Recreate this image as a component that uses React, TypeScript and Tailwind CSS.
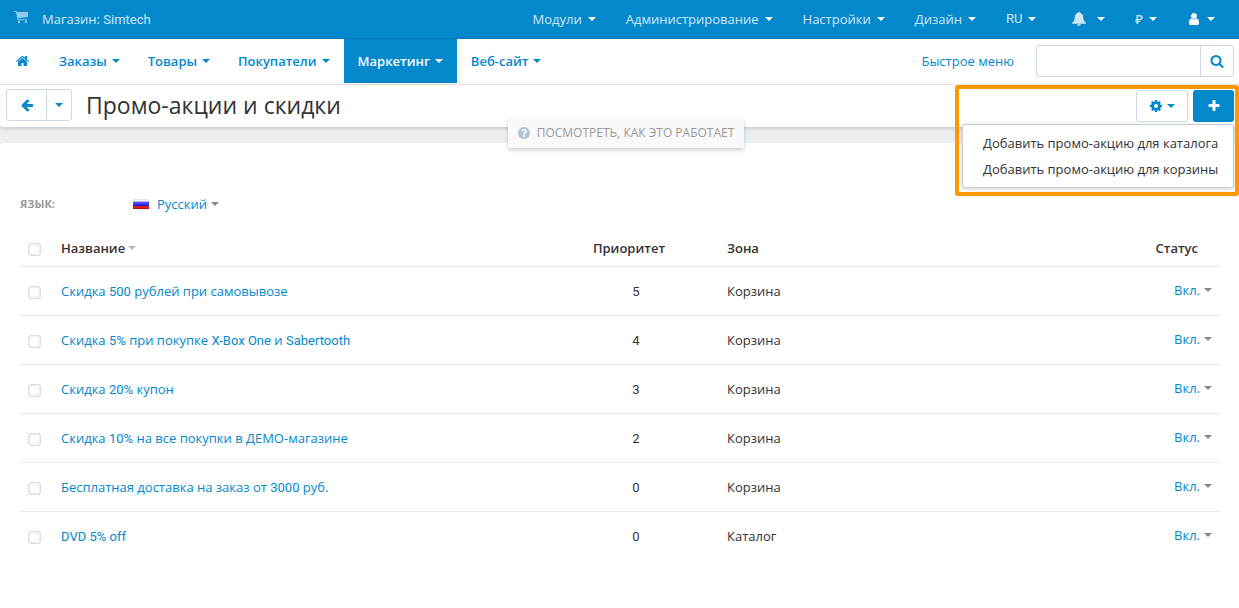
import React from "react";

const ICONS = {
  home: "M1408 992v480q0 26-19 45t-45 19h-384v-384h-256v384h-384q-26 0-45-19t-19-45v-480q0-1 .5-3t.5-3l575-474 575 474q1 2 1 6zm223-69l-62 74q-8 9-21 11h-3q-13 0-21-7l-692-577-692 577q-12 8-24 7-13-2-21-11l-62-74q-8-10-7-23.5t11-21.5l719-599q32-26 76-26t76 26l244 204v-195q0-14 9-23t23-9h192q14 0 23 9t9 23v408l219 182q10 8 11 21.5t-7 23.5z",
  back: "M1664 896v128q0 53-32.5 90.5t-84.5 37.5h-704l293 294q38 36 38 90t-38 90l-75 76q-37 37-90 37-52 0-91-37l-651-652q-37-37-37-90 0-52 37-91l651-650q38-38 91-38 52 0 90 38l75 74q38 38 38 91t-38 91l-293 293h704q52 0 84.5 37.5t32.5 90.5z",
  search: "M1216 832q0-185-131.5-316.5t-316.5-131.5-316.5 131.5-131.5 316.5 131.5 316.5 316.5 131.5 316.5-131.5 131.5-316.5zm512 832q0 52-38 90t-90 38q-54 0-90-38l-343-342q-179 124-399 124-143 0-273.5-55.5t-225-150-150-225-55.5-273.5 55.5-273.5 150-225 225-150 273.5-55.5 273.5 55.5 225 150 150 225 55.5 273.5q0 220-124 399l343 343q37 37 37 90z",
  cog: "M1152 896q0-106-75-181t-181-75-181 75-75 181 75 181 181 75 181-75 75-181zm512-109v222q0 12-8 23t-20 13l-185 28q-19 54-39 91 35 50 107 138 10 12 10 25t-9 23q-27 37-99 108t-94 71q-12 0-26-9l-138-108q-44 23-91 38-16 136-29 186-7 28-36 28h-222q-14 0-24.5-8.5t-11.5-21.5l-28-184q-49-16-90-37l-141 107q-10 9-25 9-14 0-25-11-126-114-165-168-7-10-7-23 0-12 8-23 15-21 51-66.5t54-70.5q-27-50-41-99l-183-27q-13-2-21-12.5t-8-23.5v-222q0-12 8-23t19-13l186-28q14-46 39-92-40-57-107-138-10-12-10-24 0-10 9-23 26-36 98.5-107.5t94.5-71.5q13 0 26 10l138 107q44-23 91-38 16-136 29-186 7-28 36-28h222q14 0 24.5 8.5t11.5 21.5l28 184q49 16 90 37l142-107q9-9 24-9 13 0 25 10 129 119 165 170 7 8 7 22 0 12-8 23-15 21-51 66.5t-54 70.5q26 50 41 98l183 28q13 2 21 12.5t8 23.5z",
  plus: "M1600 736v192q0 40-28 68t-68 28h-416v416q0 40-28 68t-68 28h-192q-40 0-68-28t-28-68v-416h-416q-40 0-68-28t-28-68v-192q0-40 28-68t68-28h416v-416q0-40 28-68t68-28h192q40 0 68 28t28 68v416h416q40 0 68 28t28 68z",
  question: "M1024 1376v-192q0-14-9-23t-23-9h-192q-14 0-23 9t-9 23v192q0 14 9 23t23 9h192q14 0 23-9t9-23zm256-672q0-88-55.5-163t-138.5-116-170-41q-243 0-371 213-15 24 8 42l132 100q7 6 19 6 16 0 25-12 53-68 86-92 34-24 86-24 48 0 85.5 26t37.5 59q0 38-20 61t-68 45q-63 28-115.5 86.5t-52.5 125.5v36q0 14 9 23t23 9h192q14 0 23-9t9-23q0-19 21.5-49.5t54.5-49.5q32-18 49-28.5t46-35 44.5-48 28-60.5 12.5-81zm384 192q0 209-103 385.5t-279.5 279.5-385.5 103-385.5-103-279.5-279.5-103-385.5 103-385.5 279.5-279.5 385.5-103 385.5 103 279.5 279.5 103 385.5z",
  user: "M1536 1399q0 109-62.5 187t-150.5 78h-854q-88 0-150.5-78t-62.5-187q0-85 8.5-160.5t31.5-152 58.5-131 94-89 134.5-34.5q131 128 313 128t313-128q76 0 134.5 34.5t94 89 58.5 131 31.5 152 8.5 160.5zm-256-887q0 159-112.5 271.5t-271.5 112.5-271.5-112.5-112.5-271.5 112.5-271.5 271.5-112.5 271.5 112.5 112.5 271.5z",
};

function Icon({ name, className }: { name: keyof typeof ICONS; className: string }) {
  return (
    <svg viewBox="0 0 1792 1792" fill="currentColor" aria-hidden="true" className={className}>
      <path d={ICONS[name]} />
    </svg>
  );
}

function Caret({ className = "" }: { className?: string }) {
  return (
    <svg viewBox="0 0 8 4" fill="currentColor" aria-hidden="true" className={`h-1 w-2 shrink-0 ${className}`}>
      <path d="M0 0h8L4 4z" />
    </svg>
  );
}

/** Sets Latin words and figures in Roboto, and leaves Cyrillic in the page font. */
function Mixed({ text }: { text: string }) {
  return (
    <>
      {text.split(/([A-Za-z0-9%]+(?:[ -][A-Za-z0-9%]+)*)/).map((part, i) =>
        i % 2 ? <span key={i} className="font-[Roboto,sans-serif]">{part}</span> : part
      )}
    </>
  );
}

const topItems = ["Модули", "Администрирование", "Настройки", "Дизайн"];
const navItems = ["Заказы", "Товары", "Покупатели", "Маркетинг", "Веб-сайт"];
const promotions = [
  { name: "Скидка 500 рублей при самовывозе", priority: 5, zone: "Корзина" },
  { name: "Скидка 5% при покупке X-Box One и Sabertooth", priority: 4, zone: "Корзина" },
  { name: "Скидка 20% купон", priority: 3, zone: "Корзина" },
  { name: "Скидка 10% на все покупки в ДЕМО-магазине", priority: 2, zone: "Корзина" },
  { name: "Бесплатная доставка на заказ от 3000 руб.", priority: 0, zone: "Корзина" },
  { name: "DVD 5% off", priority: 0, zone: "Каталог" },
];

const checkbox =
  "mt-1 block size-[13px] appearance-none rounded-[3px] border border-[#dcdcdc] bg-white shadow-[inset_0_0_3px_rgba(0,0,0,0.14)] checked:bg-[#0388cc]";

function TopBar() {
  return (
    <header className="flex h-[39px] items-center bg-[#0388cc] pr-6 pb-px pl-[14px] text-white/80 shadow-[inset_0_-1px_0_#047bb8]">
      <svg viewBox="0 0 14 12" fill="currentColor" aria-hidden="true" className="mb-1 h-3 w-[14px] opacity-70">
        <path d="M0 0h2.600l.5 1H14v5L4.300 7.300l.2.900H13v1H3.700L1.900 1H0z" />
        <path d="M4 9.800h2V12H4zM11 9.800h2V12h-2z" />
      </svg>
      <a href="#store" className="ml-[14px]"><Mixed text="Магазин: Simtech" /></a>
      <nav className="ml-auto flex items-center gap-[30px] font-medium">
        {topItems.map((label) => (
          <button key={label} type="button" className="flex items-center gap-[6px]">
            {label}
            <Caret className="text-white" />
          </button>
        ))}
        <button type="button" className="flex items-center gap-[6px] font-[Roboto,sans-serif] font-normal">
          RU
          <Caret className="text-white" />
        </button>
        <button type="button" aria-label="Уведомления" className="ml-[6px] flex items-center gap-[11px]">
          <svg viewBox="0 0 14 14" fill="currentColor" aria-hidden="true" className="size-[14px]">
            <path d="M7 0c.8 0 1.300.5 1.300 1.100C10.200 1.600 11.100 3 11.200 5c.1 2.800.8 4.500 2.800 6v.7H0V11c2-1.500 2.700-3.200 2.800-6 .1-2 1-3.400 2.900-3.900C5.700.5 6.200 0 7 0zM5.200 12.200h3.600c0 1-.8 1.600-1.800 1.600s-1.800-.6-1.800-1.600z" />
          </svg>
          <Caret className="text-white" />
        </button>
        <button type="button" className="flex items-center gap-[6px]">
          ₽
          <Caret className="text-white" />
        </button>
        <button type="button" aria-label="Профиль" className="flex items-center gap-[6px] text-white">
          <Icon name="user" className="size-[14px]" />
          <Caret />
        </button>
      </nav>
    </header>
  );
}

function MainNav() {
  return (
    <div className="flex h-[46px] items-start border-b border-[#f0f0f0] bg-white text-[#0388cc]">
      <nav className="flex h-11 font-semibold">
        <a href="#home" aria-label="Главная" className="flex items-center pr-[15px] pl-4">
          <Icon name="home" className="size-[14px]" />
        </a>
        {navItems.map((label) => (
          <button
            key={label}
            type="button"
            className={`flex items-center gap-[5px] px-[14px] ${label === "Маркетинг" ? "bg-[#0388cc] text-white" : ""}`}
          >
            {label}
            <Caret />
          </button>
        ))}
      </nav>
      <a href="#quick" className="mt-3 ml-auto">Быстрое меню</a>
      <form className="mt-[6px] mr-[5px] ml-[22px] flex h-8 w-[198px] overflow-hidden rounded-[3px] border border-[#cfd9e4]">
        <input type="search" aria-label="Поиск" className="min-w-0 flex-1 px-2 outline-none" />
        <button type="button" aria-label="Найти" className="flex w-[33px] items-center justify-center border-l border-[#cfd9e4]">
          <Icon name="search" className="size-[14px]" />
        </button>
      </form>
    </div>
  );
}

function PageHeader() {
  return (
    <div className="relative flex h-[42px] items-center rounded-b-[4px] bg-white pr-[5px] pl-[6px] shadow-[0_1px_4px_rgba(0,0,0,0.2)]">
      <div className="flex items-center pb-[2px]">
        <div className="flex h-8 rounded-[3px] border border-[#cfd9e4] text-[#0388cc]">
          <button type="button" aria-label="Назад" className="flex w-10 items-center justify-center border-r border-[#cfd9e4]">
            <Icon name="back" className="size-[14px]" />
          </button>
          <button type="button" aria-label="История" className="flex w-6 items-center justify-center">
            <Caret />
          </button>
        </div>
        <h1 className="ml-[14px] text-[23px] text-[#333]">Промо-акции и скидки</h1>
      </div>
      <div className="ml-auto flex h-8 gap-[5px]">
        <button type="button" aria-label="Действия" className="flex w-[52px] items-center justify-center gap-1 rounded-[3px] border border-[#cfd9e4] text-[#0388cc]">
          <Icon name="cog" className="size-[14px]" />
          <Caret />
        </button>
        <button type="button" aria-label="Добавить" className="flex w-[41px] items-center justify-center rounded-[3px] bg-[#0388cc] text-white">
          <Icon name="plus" className="size-[14px]" />
        </button>
      </div>

      <button type="button" className="absolute top-[33px] left-1/2 flex h-[30px] w-[236px] -translate-x-[112px] items-center justify-center gap-[6px] bg-[#f9f9f9] text-xs whitespace-nowrap text-[#999] shadow-[0_2px_4px_rgba(0,0,0,0.2)]">
        <Icon name="question" className="size-[14px] text-[#b4c4d1]" />
        ПОСМОТРЕТЬ, КАК ЭТО РАБОТАЕТ
      </button>

      <ul className="absolute top-[39px] right-[5px] z-10 w-[272px] rounded-[3px] border border-[#ccc] bg-white py-[5px] whitespace-nowrap text-[#333] shadow-[0_1px_4px_rgba(0,0,0,0.2)]">
        <li className="h-[26px] px-5 leading-[26px]"><a href="#catalog">Добавить промо-акцию для каталога</a></li>
        <li className="h-[26px] px-5 leading-[26px]"><a href="#cart">Добавить промо-акцию для корзины</a></li>
      </ul>
      <div className="pointer-events-none absolute top-0 right-0 z-20 h-[111px] w-[284px] rounded-[3px] border-4 border-[#ff9900]" />
    </div>
  );
}

function PromotionsTable() {
  return (
    <table className="w-full table-fixed border-collapse text-left text-[#333]">
      <thead>
        <tr className="h-[38px] border-b border-[#eaeaea] *:pt-[2px] *:font-semibold">
          <th className="w-[41px] pl-2"><input type="checkbox" aria-label="Выбрать все" className={checkbox} /></th>
          <th>
            <button type="button" className="flex items-center gap-[3px]">
              Название
              <Caret className="text-[#bbb]" />
            </button>
          </th>
          <th className="w-[110px] pr-[14px] text-center">Приоритет</th>
          <th className="w-[408px] pl-9">Зона</th>
          <th className="w-[121px] pr-[22px] text-right">Статус</th>
        </tr>
      </thead>
      <tbody>
        {promotions.map((p) => (
          <tr key={p.name} className="h-[49px] border-b border-[#eaeaea] last:border-b-0">
            <td className="pl-2"><input type="checkbox" aria-label={p.name} className={checkbox} /></td>
            <td className="pt-[2px]"><a href="#promotion" className="text-[#0388cc]"><Mixed text={p.name} /></a></td>
            <td className="pt-[2px] text-center font-[Roboto,sans-serif]">{p.priority}</td>
            <td className="pl-9">{p.zone}</td>
            <td className="pr-2 pb-[2px]">
              <button type="button" className="ml-auto flex items-center gap-1 text-[#0388cc]">
                Вкл.
                <Caret className="text-[#888]" />
              </button>
            </td>
          </tr>
        ))}
      </tbody>
    </table>
  );
}

export default function App() {
  return (
    <div className="flex min-h-screen flex-col bg-[#ebeff2] font-['Open_Sans','Noto_Sans',sans-serif] text-[13px] leading-5">
      <TopBar />
      <MainNav />
      <PageHeader />
      <main className="mt-4 grow rounded-t-[4px] bg-white pt-[51px] pr-[19px] pl-5">
        <div className="flex h-5 items-center">
          <span className="w-[113px] text-[11px] font-bold text-[#999]">ЯЗЫК:</span>
          <button type="button" className="flex items-center text-[#0388cc]">
            <svg viewBox="0 0 16 10" aria-hidden="true" className="mr-2 mb-px h-[10px] w-4">
              <defs>
                <linearGradient id="flag-blue" x1="0" y1="0" x2="0" y2="1">
                  <stop offset="0" stopColor="#6a6af6" />
                  <stop offset="1" stopColor="#1414e0" />
                </linearGradient>
              </defs>
              <path fill="#e6e6e6" d="M0 0h16v3H0z" />
              <path fill="#f8f8f8" d="M1 1h14v2H1z" />
              <path fill="url(#flag-blue)" d="M0 2.500h16V7H0z" />
              <path fill="#e81818" d="M0 7h16v3H0z" />
              <path fill="#b80c0c" d="M0 9h16v1H0z" />
            </svg>
            Русский
            <Caret className="ml-1 text-[#888]" />
          </button>
        </div>
        <div className="mt-[14px]">
          <PromotionsTable />
        </div>
      </main>
    </div>
  );
}
